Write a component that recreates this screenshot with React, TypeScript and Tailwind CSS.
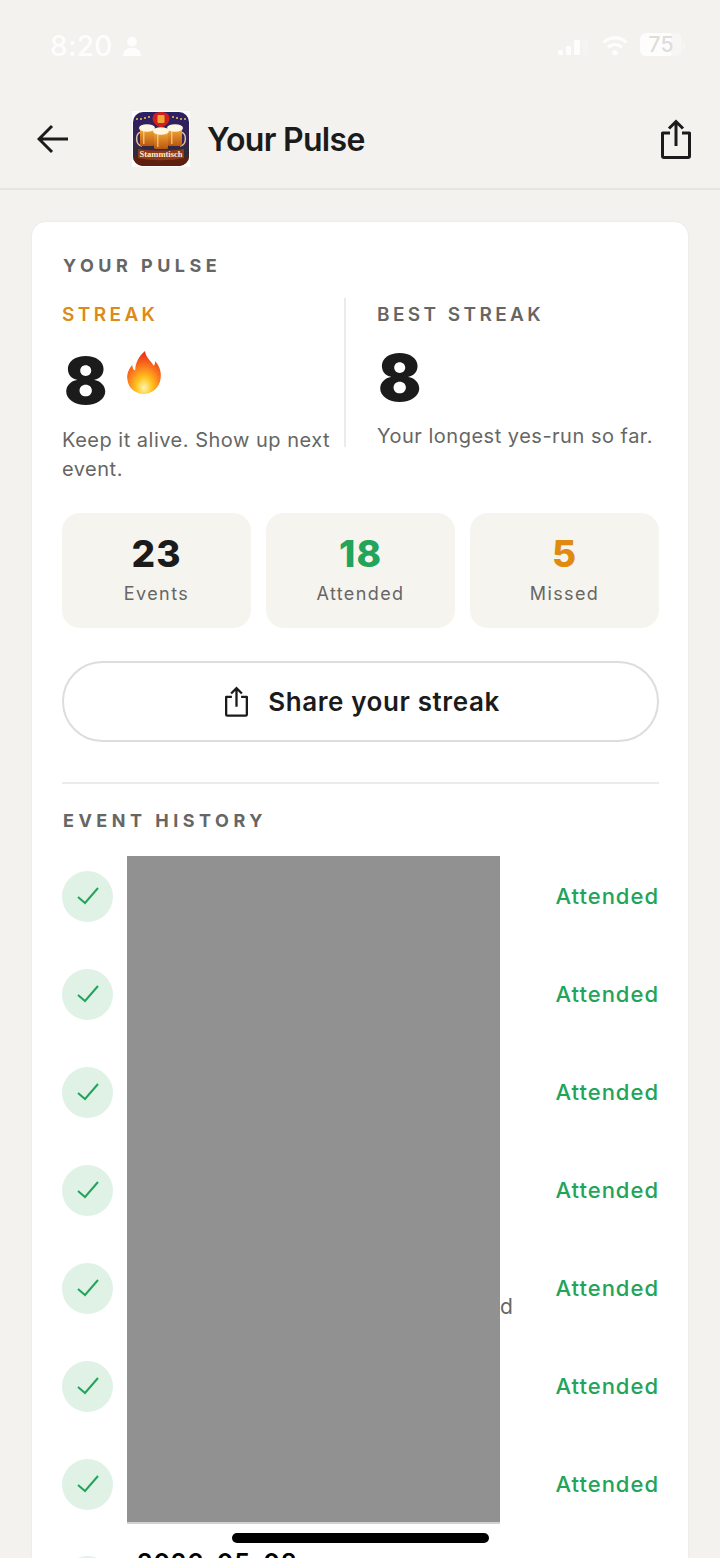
const font = { fontFamily: 'Inter, "Liberation Sans", sans-serif' }

const ShareIcon: React.FC<{ className?: string }> = ({ className }) => (
  <svg viewBox="0 0 30 40" fill="none" stroke="currentColor" strokeWidth={3} className={className}>
    <path d="M15 27V3M8 9.500l7-7 7 7" />
    <path d="M9 14H1.500v23a1.500 1.500 0 0 0 1.500 1.500h24a1.500 1.500 0 0 0 1.500-1.500V14H21" strokeLinejoin="round" />
  </svg>
)

const Mug: React.FC<{ x: number; y: number }> = ({ x, y }) => (
  <g>
    <rect x={x} y={y} width="14" height="18" rx="1.500" fill="url(#beer)" />
    <rect x={x + 3} y={y + 2} width="1.500" height="14" fill="#ffd98a" opacity="0.7" />
    <ellipse cx={x + 7} cy={y} rx="8" ry="3.800" fill="#fff6e2" />
  </g>
)

const AppLogo: React.FC = () => (
  <div className="w-[58px] h-[56px] bg-white flex items-center justify-center">
    <svg viewBox="0 0 56 54" className="w-[56px] h-[54px]">
      <defs>
        <linearGradient id="sky" x1="0" y1="0" x2="0" y2="1">
          <stop offset="0" stopColor="#2b1f66" />
          <stop offset="0.55" stopColor="#3b2450" />
          <stop offset="1" stopColor="#1c3a1e" />
        </linearGradient>
        <linearGradient id="beer" x1="0" y1="0" x2="0" y2="1">
          <stop offset="0" stopColor="#f5ad3a" />
          <stop offset="1" stopColor="#b9560f" />
        </linearGradient>
        <clipPath id="logoClip">
          <rect width="56" height="54" rx="10" />
        </clipPath>
      </defs>
      <g clipPath="url(#logoClip)">
        <rect width="56" height="54" fill="url(#sky)" />
        <path d="M28 0c5 0 8.500 2 8.500 6.500S32 14 28 16c-4-2-8.500-5-8.500-9.500S23 0 28 0z" fill="#cf1f1c" />
        <rect x="24.500" y="3" width="7" height="8" rx="1" fill="#f0a636" />
        <g fill="#f5c84c">
          <circle cx="4" cy="7" r="1" /><circle cx="8" cy="7" r="1" /><circle cx="12" cy="6" r="1" /><circle cx="16" cy="5" r="1" />
          <circle cx="40" cy="5" r="1" /><circle cx="44" cy="6" r="1" /><circle cx="48" cy="7" r="1" /><circle cx="52" cy="7" r="1" />
        </g>
        <path d="M8 20c-6 1-6 13 1 14M48 20c6 1 6 13-1 14" fill="none" stroke="#d8c7a2" strokeWidth="1.500" />
        <Mug x={7} y={16} />
        <Mug x={35} y={16} />
        <Mug x={21} y={19} />
        <path d="M0 44c14 4 42 4 56 0v10H0z" fill="#5f1f0f" />
        <path d="M5 37c14 2 32 2 46 0v9c-14 3-32 3-46 0z" fill="#8d3a1a" />
        <text x="28" y="45" textAnchor="middle" fontSize="8.500" fill="#fbeed3" fontFamily='"Liberation Serif", serif' fontWeight="700">Stammtisch</text>
      </g>
    </svg>
  </div>
)

const FlameIcon: React.FC = () => (
  <svg viewBox="0 0 36 46" className="w-[38px] h-[45px]">
    <defs>
      <radialGradient id="flame" cx="0.5" cy="0.85" r="0.8">
        <stop offset="0" stopColor="#fff6b0" />
        <stop offset="0.3" stopColor="#ffc21f" />
        <stop offset="0.65" stopColor="#f9731c" />
        <stop offset="1" stopColor="#e8321a" />
      </radialGradient>
    </defs>
    <path d="M19 1c1 7 6 10 9 15 1-1 2-3 1-5 5 5 7 12 6 18-1 10-9 16-17 16S2 40 1 30c-1-6 2-11 5-15 0 3 1 5 3 6C9 13 13 6 19 1z" fill="url(#flame)" />
  </svg>
)

const Stat: React.FC<{ value: string; label: string; color: string }> = ({ value, label, color }) => (
  <div className="flex-1 h-[115px] rounded-[18px] bg-[#f6f4ef] flex flex-col items-center pt-[19px]">
    <div className={`text-[37px] leading-[44px] font-extrabold tracking-[1px] ${color}`}>{value}</div>
    <div className="mt-[5px] text-[18px] leading-[26px] tracking-[1.400px] text-[#666664]">{label}</div>
  </div>
)

const HistoryRow: React.FC<{ trailing?: string }> = ({ trailing }) => (
  <div className="h-[98px] flex items-center">
    <div className="w-[51px] h-[51px] rounded-full bg-[#e0f2e6] flex items-center justify-center shrink-0">
      <svg viewBox="0 0 24 24" fill="none" stroke="#22a45a" strokeWidth="2" className="w-[24px] h-[24px]">
        <path d="M2 13l7 6L22 4" />
      </svg>
    </div>
    <div className="flex-1 pl-[387px] pt-[38px] text-[21px] leading-[26px] text-[#666664]">{trailing}</div>
    <div className="text-[22px] font-medium tracking-[1px] text-[#22a45a]">Attended</div>
  </div>
)

export default function App() {
  return (
    <div className="relative h-[1558px] overflow-hidden bg-[#f3f2ef] text-[#1b1b1b]" style={font}>
      {/* Status bar */}
      <div className="h-[94px] pl-[50px] pr-[35px] pt-[33px] flex justify-between items-start text-white">
        <div className="flex items-center gap-[10px] opacity-90 -mt-[5px]">
          <span className="text-[28px] leading-[36px] font-medium tracking-[0.3px]">8:20</span>
          <svg viewBox="0 0 16 18" fill="currentColor" className="w-[18px] h-[20px]">
            <circle cx="8" cy="5" r="4.400" />
            <path d="M0 18c0-5 3-7.500 8-7.500s8 2.500 8 7.500z" />
          </svg>
        </div>
        <div className="flex items-center gap-[10px] opacity-90">
          <svg viewBox="0 0 32 16" fill="currentColor" className="w-[32px] h-[16px] mt-[4px]">
            <rect x="0" y="11" width="5" height="5" rx="1" />
            <rect x="8" y="7" width="5" height="9" rx="1" />
            <rect x="16" y="1" width="6" height="15" rx="1" />
            <rect x="25" y="0" width="5" height="16" rx="1" opacity="0.25" />
          </svg>
          <svg viewBox="0 0 28 22" fill="none" stroke="currentColor" strokeWidth="3.400" className="w-[30px] h-[21px] mt-[2px]">
            <path d="M2 8c7-6.500 17-6.500 24 0M6.500 13c4.500-4 10.500-4 15 0" />
            <circle cx="14" cy="18.500" r="2.800" fill="currentColor" stroke="none" />
          </svg>
          <div className="flex items-center gap-[1px]">
            <div className="w-[42px] h-[23px] rounded-[6px] bg-[linear-gradient(90deg,#ffffff_75%,#f8f7f5_75%)] flex items-center justify-center text-[#dcdbd7] text-[21px] font-medium leading-none">75</div>
            <div className="w-[2px] h-[8px] rounded-r-sm bg-[#f8f7f5]" />
          </div>
        </div>
      </div>

      {/* Header */}
      <div className="h-[96px] pl-[37px] pr-[29px] pb-[4px] flex items-center border-b-2 border-[#e6e5e2]">
        <svg viewBox="0 0 32 30" fill="none" stroke="currentColor" strokeWidth={3} className="w-[32px] h-[30px]">
          <path d="M31 15H3M15 2L2 15l13 13" />
        </svg>
        <div className="ml-[63px]"><AppLogo /></div>
        <h1 className="ml-[17px] mt-[1px] text-[32px] font-semibold tracking-[-0.7px]">Your Pulse</h1>
        <ShareIcon className="ml-auto w-[30px] h-[40px] -mt-[1px]" />
      </div>

      {/* Card */}
      <div className="mx-[32px] mt-[32px] h-[1400px] rounded-t-[14px] bg-white pl-[30px] pr-[29px] pt-[33px] shadow-[0_0_2px_rgba(0,0,0,0.08)]">
        <div className="pl-[1px] text-[18px] leading-[21px] font-bold tracking-[4.500px] text-[#666664]">YOUR PULSE</div>

        <div className="mt-[22px] flex">
          <div className="w-[284px] border-r-2 border-[#ebebe9] h-[149px]">
            <div className="pt-[2px] text-[19px] leading-[30px] font-semibold tracking-[3.400px] text-[#dc8a18]">STREAK</div>
            <div className="mt-[13px] flex items-start pl-[2px]">
              <span className="text-[64px] leading-[76px] font-black">8</span>
              <div className="ml-[18px] mt-[7px]"><FlameIcon /></div>
            </div>
            <p className="mt-[7px] w-[290px] text-[20px] leading-[29px] tracking-[0.5px] text-[#666664]">
              Keep it alive. Show up next event.
            </p>
          </div>
          <div className="pl-[31px]">
            <div className="pt-[2px] text-[19px] leading-[30px] font-semibold tracking-[3.400px] text-[#666664]">BEST STREAK</div>
            <div className="mt-[10px] pl-[1px] text-[64px] leading-[76px] font-black">8</div>
            <p className="mt-[5px] whitespace-nowrap text-[20px] leading-[30px] tracking-[0.5px] text-[#666664]">
              Your longest yes-run so far.
            </p>
          </div>
        </div>

        <div className="mt-[62px] flex gap-[15px]">
          <Stat value="23" label="Events" color="text-[#1b1b1b]" />
          <Stat value="18" label="Attended" color="text-[#22a45a]" />
          <Stat value="5" label="Missed" color="text-[#e08a10]" />
        </div>

        <button className="mt-[33px] w-full h-[81px] pl-[4px] rounded-full border-2 border-[#dddddb] flex items-center justify-center gap-[20px] bg-white">
          <ShareIcon className="w-[23px] h-[31px]" />
          <span className="text-[26px] font-semibold tracking-[0.6px]">Share your streak</span>
        </button>

        <div className="mt-[40px] border-t-2 border-[#ebebe9]" />
        <div className="mt-[26px] pl-[1px] text-[18px] leading-[21px] font-bold tracking-[4.500px] text-[#666664]">EVENT HISTORY</div>

        <div className="mt-[16px]">
          <HistoryRow />
          <HistoryRow />
          <HistoryRow />
          <HistoryRow />
          <HistoryRow trailing="d" />
          <HistoryRow />
          <HistoryRow />
          <div className="flex items-start">
            <div className="w-[51px] h-[51px] mt-[23px] rounded-full bg-[#e0f2e6] shrink-0" />
            <div className="ml-[24px] mt-[15px] text-[25px] leading-[30px] font-semibold tracking-[0.9px] text-black">2026-05-08</div>
          </div>
        </div>
      </div>

      {/* Redaction block over the event names */}
      <div className="absolute left-[127px] top-[856px] w-[373px] h-[668px] bg-[#919191] border-b-2 border-[#d2d2d2]" />

      {/* Home indicator */}
      <div className="absolute left-[232px] top-[1533px] w-[257px] h-[10px] rounded-full bg-black" />
    </div>
  )
}
